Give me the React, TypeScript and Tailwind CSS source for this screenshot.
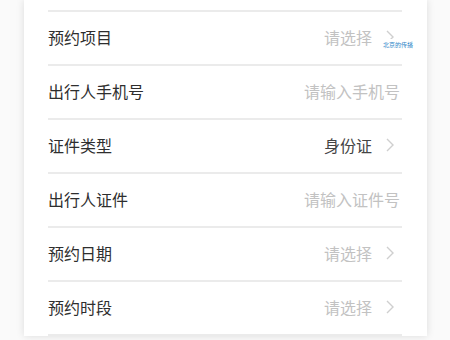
import React from "react";

type Row = { label: string; value: string; placeholder: boolean; arrow: boolean };

const rows: Row[] = [
  { label: "预约项目", value: "请选择", placeholder: true, arrow: true },
  { label: "出行人手机号", value: "请输入手机号", placeholder: true, arrow: false },
  { label: "证件类型", value: "身份证", placeholder: false, arrow: true },
  { label: "出行人证件", value: "请输入证件号", placeholder: true, arrow: false },
  { label: "预约日期", value: "请选择", placeholder: true, arrow: true },
  { label: "预约时段", value: "请选择", placeholder: true, arrow: true },
];

function Chevron() {
  return (
    <svg width="10" height="16" viewBox="0 0 10 16" className="ml-[13px] mr-[5px]">
      <polyline points="2,2 8,8 2,14" fill="none" stroke="#cfcfcf" strokeWidth="1.4" />
    </svg>
  );
}

export default function App() {
  return (
    <div
      className="relative h-[340px] w-[450px] overflow-hidden bg-[#fafafa]"
      style={{ fontFamily: '"Noto Sans CJK SC", "Noto Sans", sans-serif' }}
    >
      <div className="ml-[24px] w-[403px] bg-white pl-[24px] pr-[25px] shadow-[0_0_8px_rgba(0,0,0,0.12)]">
        <div className="h-[12px] border-b-2 border-[#ebebeb]" />
        {rows.map((r) => (
          <div key={r.label} className="flex h-[54px] items-center justify-between border-b-2 border-[#ebebeb] pr-[2px]">
            <span className="-mt-[2px] text-[16px] leading-[16px] text-[#2e2e2e]">{r.label}</span>
            <div className="-mt-[2px] flex items-center">
              <span className={`text-[16px] leading-[16px] ${r.placeholder ? "text-[#c2c2c2]" : "text-[#444]"}`}>
                {r.value}
              </span>
              {r.arrow && <Chevron />}
            </div>
          </div>
        ))}
      </div>
      <div className="absolute left-[381px] top-[39px] bg-white px-[2px] pt-[3px] pb-[2px] text-[6px] leading-none text-[#2f86c8]">
        北京的传播
      </div>
    </div>
  );
}
